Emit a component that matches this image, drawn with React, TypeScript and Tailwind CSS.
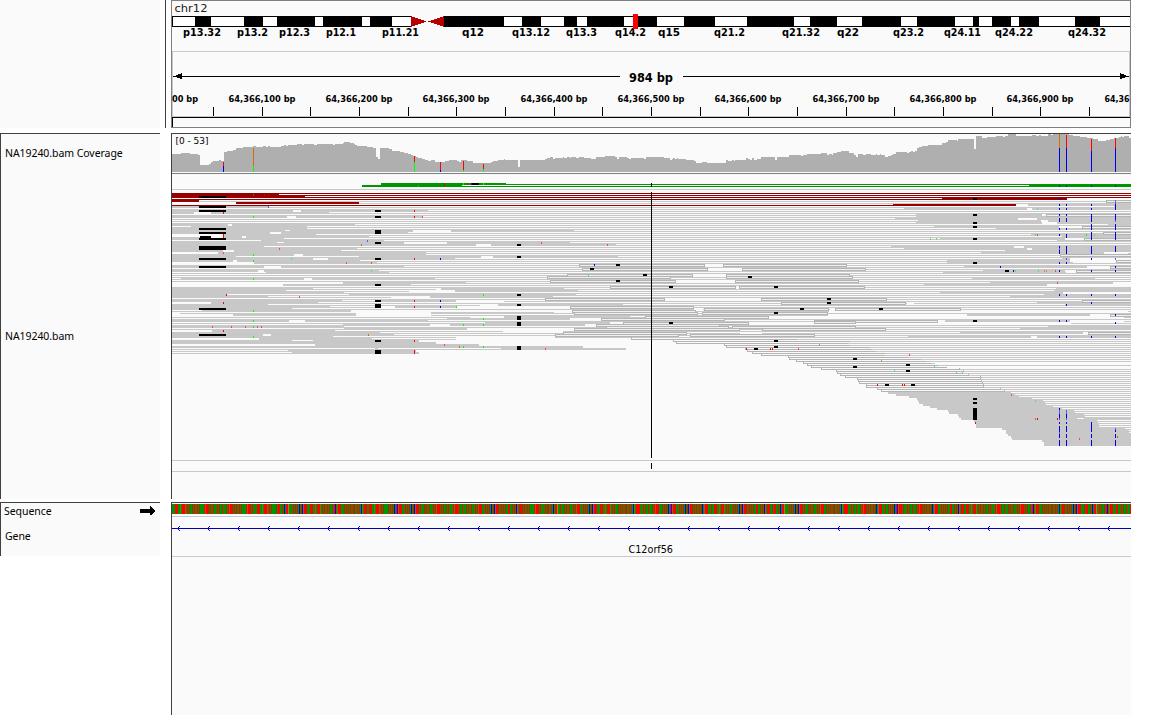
import React from "react";

type Span = [number, number];

const GRAY = "#c8c8c8";
const OUTLINE = "#b4b4b4";
const PAPER = "#fafafa";
const RED = "#960000";
const MISMATCH: Record<string, string> = {
  r: "#ff0000",
  g: "#00ff00",
  b: "#0000e6",
  o: "#d17105",
  p: "#e85050",
  l: "#50e850",
  v: "#5a5ae0",
  t: "#d89040",
};

/* ---------- small SVG helpers (x0, x1 are exclusive pixel ranges) ---------- */

function Bar({ x, y, x2, h, fill }: { x: number; y: number; x2: number; h: number; fill: string }) {
  return <rect x={x} y={y} width={x2 - x} height={h} fill={fill} />;
}

function Label(props: {
  x: number;
  y: number;
  w: number;
  size: number;
  text: string;
  bold?: boolean;
  family?: string;
  fill?: string;
}) {
  return (
    <text
      x={props.x}
      y={props.y}
      textLength={props.w}
      lengthAdjust="spacingAndGlyphs"
      fontSize={props.size}
      fontWeight={props.bold ? 700 : 400}
      fontFamily={props.family ?? "'DejaVu Sans', sans-serif"}
      fill={props.fill ?? "#000"}
    >
      {props.text}
    </text>
  );
}

/* ------------------------------- ideogram -------------------------------- */

const BANDS: Span[] = [
  [195, 211], [244, 263], [277, 315], [323, 362], [370, 392], [444, 504], [522, 541], [564, 577],
  [587, 624], [638, 657], [684, 715], [747, 794], [810, 837], [862, 901], [917, 955], [973, 979],
  [992, 1011], [1019, 1039], [1075, 1100],
];

const BAND_NAMES: [string, number, number][] = [
  ["p13.32", 183, 38], ["p13.2", 237, 31], ["p12.3", 279, 31], ["p12.1", 326, 30], ["p11.21", 382, 37],
  ["q12", 462, 22], ["q13.12", 512, 38], ["q13.3", 566, 31], ["q14.2", 615, 31], ["q15", 658, 22],
  ["q21.2", 714, 31], ["q21.32", 782, 38], ["q22", 837, 22], ["q23.2", 893, 31], ["q24.11", 944, 37],
  ["q24.22", 995, 38], ["q24.32", 1068, 38],
];

function Ideogram() {
  return (
    <svg className="block" width="959" height="50" viewBox="172 1 959 50" shapeRendering="crispEdges">
      <Label x={174.5} y={12} w={33} size={11} text="chr12" fill="#202020" />
      <rect x="172" y="16" width="959" height="11" fill="#000" />
      <rect x="173" y="17" width="958" height="9" fill="#fff" />
      <rect x="411" y="16" width="33" height="11" fill={PAPER} />
      {BANDS.map(([a, b]) => (
        <Bar key={a} x={a} x2={b} y={16} h={11} fill="#000" />
      ))}
      <path d="M411 16L426.500 21.500L411 27ZM444 16L428 21.500L444 27Z" fill="#b40000" />
      {BAND_NAMES.map(([t, x, w]) => (
        <Label key={t} x={x} y={36} w={w} size={10} text={t} bold />
      ))}
      <rect x="633" y="14" width="5" height="15" fill="#f00" />
    </svg>
  );
}

/* --------------------------------- ruler --------------------------------- */

const TICKS = [213, 262, 310, 359, 408, 456, 505, 554, 602, 651, 700, 748, 797, 846, 894, 943, 992, 1040, 1089];

function Ruler() {
  return (
    <svg className="block" width="959" height="76" viewBox="172 51 959 76" shapeRendering="crispEdges">
      <rect x="172.500" y="51.500" width="957" height="65" fill="none" stroke="#c8c8d2" />
      <Bar x={173} x2={620} y={76} h={1} fill="#000" />
      <Bar x={683} x2={1129} y={76} h={1} fill="#000" />
      <path d="M173 76.500L182 73V79ZM1129 76.500L1120 73V79Z" fill="#000" />
      <Label x={629} y={82} w={44} size={12} text="984 bp" bold />
      {TICKS.map((x) => (
        <Bar key={x} x={x} x2={x + 1} y={107} h={9} fill="#000" />
      ))}
      <Label x={172} y={102} w={26} size={9.5} text="00 bp" bold family="'DejaVu Sans Condensed','DejaVu Sans',sans-serif" />
      {TICKS.filter((_, i) => i % 2 === 1).map((x, i) => (
        <Label
          key={x}
          x={x - 33.5}
          y={102}
          w={67}
          size={9.5}
          text={`64,366,${i + 1}00 bp`}
          bold
          family="'DejaVu Sans Condensed','DejaVu Sans',sans-serif"
        />
      ))}
      <Label x={1104.5} y={102} w={25} size={9.5} text="64,36" bold family="'DejaVu Sans Condensed','DejaVu Sans',sans-serif" />
      <Bar x={172} x2={1131} y={117} h={1} fill="#000" />
      <Bar x={172} x2={173} y={117} h={10} fill="#000" />
    </svg>
  );
}

/* -------------------------------- coverage ------------------------------- */

const DEPTH: Span[] = [
  [172, 154], [181, 153], [190, 154], [198, 155], [200, 165], [209, 164], [211, 162], [213, 161], [219, 160],
  [221, 161], [224, 152], [227, 151], [233, 150], [236, 148], [243, 147], [253, 146], [256, 147], [263, 146],
  [266, 147], [268, 146], [270, 147], [281, 146], [284, 145], [286, 146], [288, 145], [297, 144], [302, 145],
  [304, 144], [314, 145], [317, 144], [333, 145], [335, 144], [343, 143], [344, 142], [350, 143], [354, 144],
  [355, 145], [357, 146], [367, 147], [373, 148], [376, 157], [378, 159], [380, 148], [389, 149], [392, 151],
  [400, 152], [404, 153], [408, 154], [411, 155], [413, 156], [416, 157], [418, 158], [422, 159], [425, 160],
  [428, 161], [431, 160], [435, 162], [445, 161], [449, 160], [457, 161], [459, 162], [461, 160], [467, 161],
  [473, 163], [491, 162], [493, 161], [498, 160], [504, 159], [505, 160], [518, 167], [520, 160], [545, 159],
  [547, 158], [550, 157], [553, 159], [555, 158], [563, 157], [564, 158], [567, 157], [570, 158], [571, 157],
  [576, 158], [579, 157], [584, 158], [591, 159], [596, 157], [605, 156], [615, 157], [617, 159], [619, 157],
  [627, 158], [629, 159], [631, 158], [644, 159], [646, 157], [664, 158], [670, 160], [672, 159], [673, 158],
  [675, 159], [677, 158], [678, 159], [686, 160], [694, 161], [696, 163], [702, 162], [707, 163], [726, 160],
  [728, 161], [732, 160], [734, 161], [735, 160], [746, 158], [748, 159], [750, 160], [752, 158], [754, 160],
  [757, 159], [761, 157], [775, 160], [777, 157], [789, 155], [801, 156], [803, 155], [807, 154], [821, 153],
  [827, 155], [829, 154], [832, 155], [833, 153], [837, 152], [841, 151], [849, 153], [854, 155], [856, 157],
  [858, 154], [863, 155], [866, 154], [871, 155], [876, 154], [877, 155], [880, 154], [881, 155], [885, 157],
  [888, 156], [891, 155], [893, 154], [896, 152], [907, 153], [909, 152], [911, 151], [913, 152], [915, 151],
  [917, 148], [919, 147], [922, 146], [928, 145], [942, 143], [946, 142], [948, 140], [957, 141], [958, 139],
  [974, 149], [976, 136], [982, 138], [987, 137], [996, 136], [1003, 137], [1005, 136], [1008, 134],
  [1016, 136], [1032, 135], [1036, 136], [1039, 135], [1041, 136], [1048, 134], [1051, 135], [1053, 134],
  [1069, 135], [1073, 136], [1080, 137], [1087, 138], [1093, 139], [1098, 141], [1106, 140], [1110, 139],
  [1114, 138], [1119, 137], [1121, 136], [1122, 137], [1124, 136], [1129, 138],
];
const DEPTH_PATH = "M172 172" + DEPTH.map(([, y], i) => `V${y}H${DEPTH[i + 1]?.[0] ?? 1131}`).join("") + "V172Z";

/* x, top, split, upper colour, lower colour */
const VARIANTS: [number, number, number, string, string][] = [
  [223, 162, 166, "r", "b"], [253, 148, 166, "o", "g"], [414, 156, 162, "r", "g"], [440, 162, 170, "r", "b"],
  [463, 161, 170, "r", "g"], [483, 164, 169, "r", "g"], [1059, 134, 148, "o", "b"], [1066, 135, 148, "r", "b"],
  [1091, 139, 151, "r", "b"], [1115, 138, 148, "r", "b"],
];

function Coverage() {
  return (
    <svg className="block" width="959" height="39" viewBox="172 134 959 39" shapeRendering="crispEdges">
      <path d={DEPTH_PATH} fill="#afafaf" />
      {VARIANTS.map(([x, top, mid, up, low]) => (
        <React.Fragment key={x}>
          <Bar x={x} x2={x + 1} y={top} h={mid - top} fill={MISMATCH[up]} />
          <Bar x={x} x2={x + 1} y={mid} h={172 - mid} fill={MISMATCH[low]} />
        </React.Fragment>
      ))}
      <Label x={175.500} y={143.500} w={33} size={8.500} text="[0 - 53]" />
    </svg>
  );
}

/* ------------------------------- alignments ------------------------------ */

/* Row number → read bodies */
const READS: Record<number, Span[]> = {
  7: [[172, 269], [1114, 1131]], 8: [[904, 1131]], 9: [[172, 428]], 10: [[172, 194], [211, 329]],
  11: [[916, 1131]], 12: [[172, 423], [916, 1046]], 13: [[895, 1131]], 14: [[918, 1131]],
  15: [[916, 1131]], 16: [[172, 355], [1108, 1131]], 17: [[191, 307], [934, 1082]], 18: [[172, 307], [996, 1131]],
  19: [[172, 285], [290, 413], [451, 574]], 20: [[172, 408]], 21: [[223, 316], [1031, 1131]],
  22: [[211, 369], [1062, 1131]], 23: [[172, 284], [940, 1084]], 24: [[261, 384], [1057, 1131]],
  25: [[172, 277], [284, 404], [447, 570]], 26: [[172, 476], [491, 616]], 27: [[172, 264], [891, 1131]],
  28: [[172, 357], [904, 1131]], 29: [[172, 341], [1005, 1131]], 30: [[218, 426], [981, 1104]],
  31: [[172, 426]], 32: [[172, 236], [359, 481], [493, 618]], 33: [[172, 455], [1062, 1131]],
  34: [[172, 360], [947, 1070]], 35: [[254, 377], [947, 1073]], 37: [[172, 404], [964, 1087]],
  39: [[172, 379], [983, 1065]], 40: [[266, 389], [943, 1066]], 43: [[181, 435], [972, 1095]],
  45: [[343, 466], [990, 1113]], 46: [[283, 411], [924, 1047]], 48: [[172, 313], [436, 564], [1056, 1131]],
  49: [[172, 286], [455, 578], [1054, 1131]], 50: [[172, 344], [940, 1063]],
  51: [[172, 227], [349, 576], [1044, 1131]], 52: [[172, 268], [430, 553], [1010, 1131]],
  54: [[172, 342], [375, 456]], 55: [[211, 318], [1037, 1131]], 56: [[172, 268], [498, 623], [1065, 1131]],
  57: [[172, 330], [395, 457]], 58: [[172, 292]], 59: [[202, 351]], 60: [[431, 554]],
  61: [[233, 356], [967, 1090]], 62: [[504, 630]], 63: [[447, 570]], 64: [[172, 428], [945, 1070]],
  65: [[485, 610]], 66: [[343, 585]], 67: [[172, 344], [1048, 1131]], 68: [[344, 467], [1020, 1131]],
  69: [[212, 335]], 70: [[172, 380], [960, 1083]], 71: [[172, 394]], 72: [[172, 333], [908, 1131]],
  73: [[259, 372]], 74: [[172, 292], [313, 419]], 75: [[172, 313], [313, 436]], 76: [[315, 479]],
  77: [[172, 460], [460, 583]], 78: [[375, 378], [501, 626]], 79: [[288, 416]], 80: [[292, 419]],
  100: [[888, 1011]], 101: [[896, 1015]], 102: [[909, 1019]], 103: [[917, 1032]], 104: [[918, 1043]],
  105: [[919, 1045]], 106: [[923, 1046]], 107: [[930, 1053]], 108: [[937, 1062]], 109: [[948, 1074]],
  110: [[949, 1075]], 111: [[958, 1084]], 112: [[959, 1085]], 113: [[961, 1077], [1084, 1131]],
  114: [[974, 1097]], 115: [[976, 1098]], 116: [[976, 1099]], 117: [[976, 1099]], 118: [[1002, 1125]],
  119: [[1006, 1129]], 120: [[1006, 1129]], 121: [[1008, 1131]], 122: [[1011, 1131]], 123: [[1012, 1131]],
  124: [[1042, 1131]], 125: [[1044, 1131]], 126: [[1044, 1131]],
};

/* Row number → spans without any read or mate line */
const GAPS: Record<number, Span[]> = {
  5: [[172, 236]], 6: [[1016, 1028]], 8: [[1027, 1032]], 9: [[293, 301]], 10: [[194, 211]],
  11: [[1042, 1046]], 12: [[287, 296]], 13: [[1018, 1037]], 14: [[1041, 1048]], 15: [[1042, 1057]],
  16: [[228, 232]], 17: [[1059, 1082]], 19: [[413, 451]], 20: [[270, 281]], 21: [[172, 223]], 22: [[211, 223], [242, 246]],
  23: [[1065, 1084]], 25: [[404, 447]], 26: [[476, 491]], 27: [[1014, 1024]], 28: [[1027, 1032]],
  29: [[223, 234]], 30: [[172, 218], [1104, 1128]], 31: [[294, 303]], 32: [[481, 493]], 33: [[313, 328], [1070, 1131]],
  34: [[233, 237], [1070, 1116]], 35: [[172, 254]], 37: [[264, 281], [1087, 1110]], 39: [[258, 264], [1065, 1076]],
  43: [[304, 312]], 45: [[172, 343], [1113, 1131]], 46: [[172, 283], [1047, 1131]], 48: [[436, 441]],
  49: [[409, 455]], 50: [[1063, 1131]], 52: [[391, 430]], 54: [[456, 504]], 55: [[172, 211], [907, 914]],
  56: [[480, 498]], 57: [[381, 395], [457, 570]], 58: [[694, 703], [830, 835]], 59: [[351, 572], [829, 1128]],
  60: [[172, 180], [356, 431]], 61: [[172, 233], [356, 431], [828, 967], [1090, 1110]], 62: [[470, 504], [769, 1124]],
  63: [[570, 601]], 64: [[289, 305], [938, 945], [1070, 1124]], 65: [[610, 623], [749, 1071]],
  66: [[430, 450], [585, 596]], 67: [[749, 762]], 68: [[467, 574]], 69: [[172, 212], [503, 563]],
  70: [[740, 762], [1083, 1088]], 71: [[263, 271]], 72: [[1031, 1037], [456, 555]], 73: [[172, 259], [456, 631]],
  74: [[419, 673]], 75: [[436, 676]], 76: [[172, 315], [479, 724]], 77: [[583, 726]], 78: [[626, 745]],
  79: [[416, 747]], 80: [[419, 752]], 85: [[935, 1131]], 87: [[938, 1131]],
};

/* Outlined read pairs: x0, x1, y */
const BOXES: [number, number, number][] = [
  [579, 705, 264], [723, 847, 264], [582, 708, 268], [742, 866, 268], [567, 693, 274], [726, 850, 274],
  [547, 671, 276], [726, 853, 276], [550, 676, 280], [735, 859, 280], [610, 736, 286], [739, 865, 286],
  [545, 665, 298], [761, 887, 298], [781, 906, 302], [570, 694, 306], [704, 829, 308], [835, 961, 308],
  [572, 696, 310], [574, 698, 312], [702, 828, 312], [645, 769, 316], [601, 725, 318], [814, 938, 320],
  [623, 749, 322], [596, 720, 324], [814, 856, 321], [606, 729, 326], [732, 856, 326], [574, 740, 328],
  [762, 886, 328], [563, 687, 332], [690, 815, 334], [555, 679, 334],
  [1106, 1132, 200], [1046, 1132, 214], [1082, 1132, 226], [1103, 1132, 232], [1084, 1132, 238],
  [1060, 1132, 254], [1116, 1132, 260], [1110, 1132, 266], [1076, 1132, 270], [1082, 1132, 300],
  [1110, 1132, 314], [1088, 1132, 332],
];

const BOX_GAPS: [number, number, number][] = [
  [705, 723, 264], [708, 742, 268], [693, 726, 274], [676, 735, 280], [736, 739, 286], [665, 761, 298],
];

/* Staircase of left ends: row, start, end */
const STAIRS: [number, number, number][] = [
  [73, 631, 797], [74, 673, 850], [75, 676, 848], [76, 724, 850], [77, 726, 870], [78, 745, 872], [79, 747, 876],
  [80, 752, 885], [81, 761, 884], [82, 788, 908], [83, 789, 921], [84, 796, 927], [85, 803, 931], [86, 807, 938],
  [87, 811, 947], [88, 821, 960], [89, 836, 964], [90, 837, 963], [91, 840, 969], [92, 845, 981], [93, 857, 981],
  [94, 858, 982], [95, 859, 983], [96, 866, 984], [97, 866, 984], [98, 877, 1001], [99, 881, 1005],
];

/* Deletions: x0, x1, rows */
const DELETIONS: [number, number, number[]][] = [
  [199, 226, [2, 7, 9, 18, 20, 23, 27, 28, 33, 37, 58, 71]],
  [200, 211, [22]],
  [375, 381, [9, 12, 19, 20, 25, 33, 46, 54, 56, 57, 74, 79, 80]],
  [517, 521, [26, 32, 51, 56, 62, 63, 65, 66, 77, 78]],
  [616, 620, [36, 44]], [590, 594, [38]], [643, 647, [41]], [748, 752, [42]], [669, 673, [47, 65]],
  [774, 778, [47, 60, 74, 77]], [827, 831, [53, 55]], [800, 804, [58]], [879, 883, [58]],
  [973, 977, [3, 11, 15, 17, 23, 35, 64, 103, 105, 108, 109, 110, 111, 112, 113]],
  [1005, 1009, [39]], [754, 758, [78]], [853, 857, [83, 87]], [906, 910, [86, 89]], [885, 889, [96]], [911, 915, [96]],
];

/* Mismatches: colour, x, rows */
const MISMATCHES: [string, number, number[]][] = [
  ["v", 268, [7]], ["r", 223, [10, 21, 22, 55, 69]], ["p", 223, [30]], ["g", 253, [12, 31, 34, 43, 59, 64, 67, 72]],
  ["r", 414, [9, 12, 33, 54, 57, 74, 79, 80]], ["p", 422, [12]], ["v", 367, [24]], ["p", 361, [26]], ["p", 279, [28]],
  ["l", 291, [33]], ["b", 440, [33, 54, 57]], ["p", 346, [35]], ["p", 371, [35]], ["l", 371, [39]], ["r", 226, [51]],
  ["g", 483, [51, 63, 66, 77]], ["g", 463, [66, 77]], ["p", 299, [52]], ["g", 456, [57]],
  ["p", 212, [67]], ["p", 231, [67]], ["p", 245, [67]], ["p", 257, [67]], ["p", 261, [67]], ["o", 368, [71]],
  ["p", 444, [76]], ["o", 459, [77]], ["p", 541, [25]], ["p", 607, [26]], ["b", 594, [36]], ["l", 588, [41]],
  ["p", 545, [78]], ["r", 746, [78]], ["r", 770, [78]], ["r", 772, [78]], ["p", 798, [78]],
  ["l", 1037, [8]], ["l", 1106, [4]], ["l", 1035, [21]], ["p", 1037, [21]], ["g", 1086, [21]], ["l", 1094, [21]],
  ["l", 930, [23]], ["l", 936, [23]], ["b", 1000, [37]], ["b", 1013, [39]], ["l", 1015, [39]], ["l", 1038, [39]],
  ["t", 1044, [39]], ["t", 1046, [39]], ["p", 1055, [39]], ["p", 1057, [45]], ["t", 819, [76]], ["p", 909, [81]],
  ["t", 881, [84]], ["l", 934, [87]], ["l", 894, [89]], ["l", 956, [90]], ["l", 962, [90]], ["r", 877, [96]],
  ["r", 902, [96]], ["r", 904, [96]], ["p", 1011, [101]], ["l", 1035, [104]], ["p", 1035, [113]], ["r", 1037, [113]],
  ["r", 1057, [113]], ["r", 975, [115]], ["o", 1117, [122]], ["p", 1079, [123]],
  ["b", 1059, [3, 6, 8, 11, 13, 14, 18, 21, 27, 29, 30, 35, 39, 51, 64, 72, 108, 111, 112, 115, 117, 118, 119, 121, 122, 124, 125, 126]],
  ["v", 1059, [28, 109, 110, 113, 120]],
  ["b", 1066, [6, 8, 11, 13, 14, 18, 21, 22, 27, 28, 29, 30, 35, 51, 56, 64, 72, 111, 112, 115, 117, 118, 119, 121, 122, 124, 125, 126]],
  ["v", 1066, [33, 109, 110, 113]],
  ["b", 1091, [6, 8, 11, 12, 13, 14, 16, 17, 18, 20, 21, 22, 23, 27, 28, 29, 30, 33, 39, 51, 55, 72, 115, 116, 117, 118, 119, 121, 122, 124, 125, 126]],
  ["b", 1115, [6, 7, 8, 11, 12, 13, 16, 17, 18, 20, 21, 22, 23, 27, 28, 29, 37, 39, 51, 61, 65, 72, 119, 121, 122, 124, 125, 126]],
  ["v", 1115, [4, 5, 14, 33, 118]],
];

const rowTop = (row: number) => 192 + row * 2;
const MATE_ROWS = Array.from({ length: 121 }, (_, i) => i);
const RED_ROWS = [0, 1, 2, 3, 6];

function mateStart(row: number) {
  if (row < 81) return 172;
  const stair = STAIRS.find(([r]) => r === row);
  if (stair) return stair[2];
  return READS[row]?.[0][0] ?? 1131;
}

function Alignments() {
  return (
    <svg className="block" width="959" height="325" viewBox="172 174 959 325" shapeRendering="crispEdges">
      <g fill="#009600">
        <rect x="381" y="184" width="750" height="1" />
        <rect x="362" y="186" width="769" height="1" />
        <rect x="362" y="185" width="100" height="2" />
        <rect x="381" y="183" width="125" height="2" />
        <rect x="1029" y="184" width="102" height="3" />
      </g>
      <rect x="418" y="185" width="1" height="2" fill="#00c800" />
      <rect x="444" y="183" width="1" height="4" fill="#e60000" />
      <rect x="463" y="183" width="1" height="2" fill="#0f0" />
      <rect x="468" y="183" width="1" height="2" fill="#f00" />
      <rect x="471" y="183" width="1" height="2" fill="#00f" />
      <rect x="472" y="183" width="7" height="2" fill="#000" />
      <rect x="483" y="183" width="1" height="2" fill="#0f0" />
      {[1059, 1066, 1091, 1115].map((x) => (
        <rect key={x} x={x} y="185" width="1" height="2" fill="#1e1eb4" />
      ))}
      <Bar x={172} x2={1131} y={189} h={1} fill={GRAY} />

      {MATE_ROWS.map((r) => (
        <Bar key={r} x={mateStart(r)} x2={1131} y={rowTop(r) + 1} h={1} fill={RED_ROWS.includes(r) ? RED : GRAY} />
      ))}
      {Object.entries(READS).flatMap(([r, spans]) =>
        spans.map(([a, b]) => <Bar key={`${r}-${a}`} x={a} x2={b} y={rowTop(+r)} h={2} fill={GRAY} />),
      )}
      <Bar x={1028} x2={1131} y={204} h={2} fill={GRAY} />
      {Object.entries(GAPS).flatMap(([r, spans]) =>
        spans.map(([a, b]) => <Bar key={`${r}-${a}`} x={a} x2={b} y={rowTop(+r)} h={2} fill={PAPER} />),
      )}

      <g fill={RED}>
        <rect x="172" y="193" width="107" height="3" />
        <rect x="172" y="195" width="133" height="3" />
        <rect x="172" y="199" width="27" height="3" />
        <rect x="236" y="202" width="123" height="2" />
        <rect x="942" y="198" width="125" height="2" />
        <rect x="893" y="204" width="123" height="2" />
      </g>
      <Bar x={1067} x2={1131} y={198} h={2} fill={PAPER} />

      {BOXES.map(([a, b, y]) => (
        <g key={`${a}-${y}`}>
          <Bar x={a} x2={b} y={y} h={3} fill={OUTLINE} />
          <Bar x={a + 1} x2={b - 1} y={y + 1} h={1} fill="#f0f0f0" />
        </g>
      ))}
      {BOX_GAPS.map(([a, b, y]) => (
        <Bar key={`${a}-${y}`} x={a} x2={b} y={y} h={3} fill={PAPER} />
      ))}

      {STAIRS.map(([r, a, b]) => (
        <React.Fragment key={r}>
          <Bar x={a} x2={b} y={rowTop(r) + 1} h={1} fill={OUTLINE} />
          <Bar x={a} x2={a + 1} y={rowTop(r) - 1} h={3} fill={OUTLINE} />
          {r > 87 && <Bar x={b - 1} x2={b} y={rowTop(r)} h={2} fill={OUTLINE} />}
        </React.Fragment>
      ))}

      {DELETIONS.flatMap(([a, b, rows]) =>
        rows.map((r) => <Bar key={`${a}-${r}`} x={a} x2={b} y={rowTop(r)} h={2} fill="#000" />),
      )}
      {MISMATCHES.flatMap(([c, x, rows]) =>
        rows.map((r) => <Bar key={`${c}${x}-${r}`} x={x} x2={x + 1} y={rowTop(r)} h={2} fill={MISMATCH[c]} />),
      )}
      <rect x="253" y="194" width="1" height="2" fill="#507800" />
      <rect x="264" y="194" width="1" height="2" fill="#c80000" />
      <rect x="268" y="194" width="1" height="2" fill="#c80000" />

      <Bar x={172} x2={1131} y={460} h={1} fill={GRAY} />
      <Bar x={172} x2={1131} y={471} h={1} fill={GRAY} />
      <Bar x={651} x2={652} y={183} h={4} fill="#000" />
      <Bar x={651} x2={652} y={192} h={266} fill="#000" />
      <Bar x={651} x2={652} y={463} h={6} fill="#000" />
    </svg>
  );
}

/* ---------------------------- sequence and gene --------------------------- */

const BASE_COLORS: Record<string, string> = { A: "#009600", T: "#ff0000", C: "#0000ff", G: "#d17105", M: "#966400" };
const MOTIFS = [
  "AATATTAATACATTGAA",
  "TATAATATAAAATMTTTATAA",
  "ATATATAATTAATATACMATTT",
  "AATTTAAMATTTMATATAA",
  "TATAATATCAMTTTAAAT",
  "TAAATATAATAAATATMTTTA",
  "AATATATACATCMTTTA",
];

function buildSequence(length: number) {
  let out = "";
  let seed = 3;
  while (out.length < length) {
    out += MOTIFS[seed % MOTIFS.length];
    seed = (seed * 73 + 41) % 1009;
  }
  return "A" + out.slice(0, length - 1);
}
const SEQUENCE = buildSequence(959);

function SequenceTrack() {
  return (
    <svg className="block" width="959" height="10" viewBox="0 0 959 10" shapeRendering="crispEdges">
      {SEQUENCE.split("").map((base, i) => (
        <rect key={i} x={i} y="0" width="1" height="10" fill={BASE_COLORS[base]} />
      ))}
    </svg>
  );
}

function GeneTrack() {
  const chevrons = Array.from({ length: 32 }, (_, i) => 177 + i * 30);
  return (
    <svg className="block" width="959" height="43" viewBox="172 514 959 43" shapeRendering="crispEdges">
      <Bar x={172} x2={1131} y={516} h={1} fill="#c8c8d2" />
      <Bar x={172} x2={1131} y={528} h={1} fill="#0000b4" />
      {chevrons.map((x) => (
        <path
          key={x}
          d={`M${x} 528h1v1h-1zM${x + 1} 527h1v3h-1zM${x + 2} 526h1v1h-1zM${x + 2} 530h1v1h-1z`}
          fill="#0000e6"
        />
      ))}
      <Label x={628.500} y={553} w={44.500} size={10.5} text="C12orf56" />
      <Bar x={172} x2={1131} y={556} h={1} fill="#c8c8d2" />
    </svg>
  );
}

/* --------------------------------- layout -------------------------------- */

const trackName =
  "whitespace-nowrap font-['Noto_Sans',sans-serif] text-[10.5px] leading-4 tracking-[-0.06px] text-black";

export default function App() {
  return (
    <div className="flex h-[715px] w-[1150px] flex-col overflow-hidden bg-white">
      <header className="flex h-[128px] shrink-0">
        <div className="w-40 bg-[#fafafa]" />
        <div className="ml-[5px] w-px bg-[#404040]" />
        <div className="ml-[5px] w-[960px] border border-[#808080] bg-[#fafafa]">
          <div className="overflow-hidden">
            <Ideogram />
            <Ruler />
          </div>
        </div>
      </header>

      <section className="mt-[5px] flex h-[366px] shrink-0">
        <div className="w-40 border-l border-t border-[#404040] bg-[#fafafa] pl-1 pt-[11px]">
          <div className={trackName}>NA19240.bam Coverage</div>
          <div className={`mt-[167px] ${trackName}`}>NA19240.bam</div>
        </div>
        <div className="ml-[11px] w-[960px] border-l border-t border-[#404040] bg-[#fafafa]">
          <Coverage />
          <div className="h-px bg-[#808080]" />
          <Alignments />
        </div>
      </section>

      <section className="mt-[3px] flex flex-1">
        <div className="h-[54px] w-40 border-l border-t border-[#404040] bg-[#fafafa] pl-[3px]">
          <div className="flex h-[15px] items-center justify-between pr-1">
            <span className={trackName}>Sequence</span>
            <svg className="block" width="16" height="12" viewBox="1 0 16 12" shapeRendering="crispEdges">
              <path d="M1 4H11V1H12L16 5.500V6.500L12 10H11V8H1Z" fill="#000" />
            </svg>
          </div>
          <div className={`ml-px mt-[10px] ${trackName}`}>Gene</div>
        </div>
        <div className="ml-[11px] w-[960px] border-l border-t border-[#404040] bg-[#fafafa] pt-px">
          <SequenceTrack />
          <GeneTrack />
        </div>
      </section>
    </div>
  );
}
